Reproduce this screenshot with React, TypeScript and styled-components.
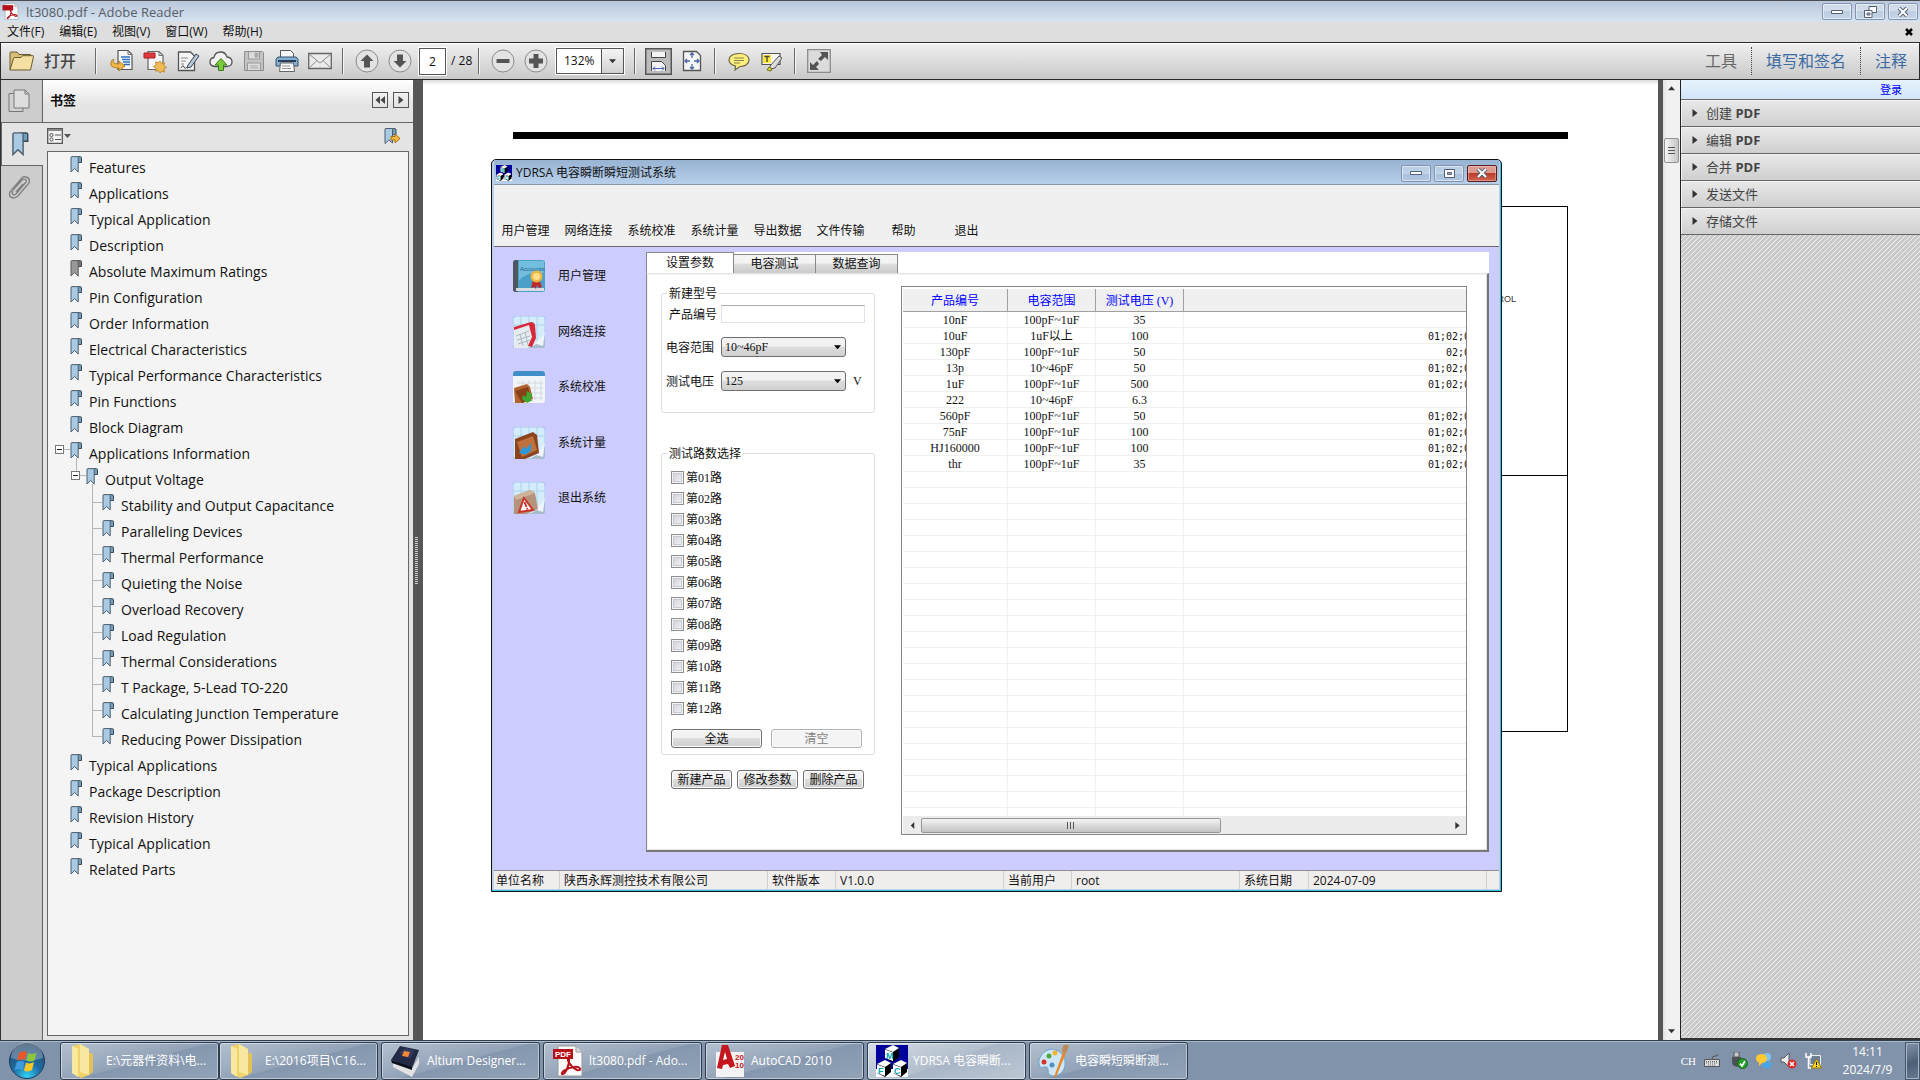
import React from "react";
import styled, { createGlobalStyle, css } from "styled-components";

const ui = '"Open Sans", "Noto Sans CJK SC", sans-serif';
const song = '"Liberation Serif", "Noto Sans CJK SC", serif';

const Global = createGlobalStyle`
  * { box-sizing: border-box; }
  body { margin: 0; overflow: hidden; font: 12px/16px ${ui}; color: #111; }
  button, input, select { font: inherit; color: inherit; margin: 0; padding: 0; border-radius: 0; }
  button { background: none; border: 0; }
  ul { list-style: none; margin: 0; padding: 0; }
  svg { display: block; flex: none; }
`;

/* ---------- reader shell ---------- */
const Desktop = styled.div`
  position: relative;
  height: 100vh;
  display: flex;
  flex-direction: column;
  background: #fff;
`;
const TitleBar = styled.header`
  height: 22px;
  flex: none;
  display: flex;
  align-items: center;
  gap: 7px;
  padding: 0 2px;
  border-top: 1px solid #4a4d52;
  background: linear-gradient(#b9c7da, #d5e3f1);
  color: #575d66;
`;
const TitleText = styled.span`
  flex: 1;
  font-size: 13px;
`;
const Controls = styled.div`
  display: flex;
  gap: 3px;
`;
const ControlButton = styled.button<{ $kind?: "close" }>`
  width: 30px;
  height: 17px;
  display: grid;
  place-items: center;
  border: 1px solid #8394b0;
  border-radius: 2px;
  box-shadow: inset 0 0 0 1px #ffffff80;
  background: linear-gradient(#ffffff40 50%, #a9bdd650 50%);
  ${(p) => p.$kind === "close" && css`
    border-color: #591c1c;
    background: linear-gradient(#dd9a8f 48%, #bc3c28 50%, #cf6450);
    box-shadow: inset 0 0 0 1px #ffffff50;
  `}
`;
const MenuBar = styled.nav`
  height: 20px;
  flex: none;
  display: flex;
  align-items: center;
  gap: 15px;
  padding: 0 6px 0 7px;
  background: #dedede;
`;
const MenuClose = styled.button`
  margin-left: auto;
  width: 10px;
  height: 16px;
  display: grid;
  place-items: center;
`;
const ToolBar = styled.div`
  height: 38px;
  flex: none;
  display: flex;
  align-items: center;
  padding: 0 12px 0 5px;
  border: 1px solid #2b2b2b;
  box-shadow: inset 0 1px 0 #fff;
  background: linear-gradient(#f0f0f0, #c9c9c9);
`;
const OpenButton = styled.button`
  display: flex;
  align-items: center;
  gap: 10px;
  width: 83px;
  padding-left: 2px;
  font-size: 16px;
  font-weight: 500;
  color: #444;
`;
const Sep = styled.span`
  width: 2px;
  height: 26px;
  margin: 0 6px;
  border-left: 1px solid #6b6b6b;
  border-right: 1px solid #f4f4f4;
`;
const ToolSet = styled.div`
  display: flex;
  padding-left: 2px;
`;
const Tool = styled.button`
  width: 33px;
  height: 27px;
  display: grid;
  place-items: center;
`;
const PageInput = styled.input`
  width: 27px;
  height: 27px;
  margin: 0 5px 0 3px;
  text-align: center;
  border: 1px solid #555;
  outline: 1px solid #fff;
  background: #fff;
`;
const Zoom = styled.div`
  display: flex;
  width: 68px;
  height: 26px;
  margin: 0 4px 0 4px;
  border: 1px solid #555;
  outline: 1px solid #fff;
  background: #fff;
`;
const ZoomInput = styled.input`
  width: 44px;
  text-align: center;
  border: 0;
  background: #fff;
`;
const ZoomDrop = styled.button`
  flex: 1;
  display: grid;
  place-items: center;
  border-left: 1px solid #555;
  background: linear-gradient(#f5f5f5, #d2d2d2);
`;
const TaskLinks = styled.div`
  margin-left: auto;
  display: flex;
`;
const TaskLink = styled.button<{ $active?: boolean }>`
  height: 28px;
  padding: 0 14px;
  font-size: 16px;
  color: ${(p) => (p.$active ? "#686868" : "#3d6ba3")};
  border-right: 1px dotted #444;
  &:last-child { border: 0; padding-right: 0; }
`;
const Main = styled.main`
  flex: 1;
  min-height: 0;
  display: flex;
`;
const Rail = styled.nav`
  width: 43px;
  flex: none;
  border-left: 1px solid #333;
  background: linear-gradient(90deg, #cdcdcd 40px, #bdbdbd);
  border-right: 1px solid #666;
`;
const RailTab = styled.button<{ $on?: boolean }>`
  width: ${(p) => (p.$on ? 42 : 41)}px;
  height: ${(p) => (p.$on ? 44 : 42)}px;
  display: grid;
  place-items: center;
  padding-right: 5px;
  ${(p) => p.$on && css`
    position: relative;
    border: 1px solid #666;
    border-right: 0;
    background: #e4e4e4;
  `}
`;
const Side = styled.aside`
  width: 370px;
  flex: none;
  display: flex;
  flex-direction: column;
  background: #e4e4e4;
`;
const SideHead = styled.div`
  height: 43px;
  display: flex;
  align-items: center;
  gap: 5px;
  padding: 0 4px 2px 7px;
  border-bottom: 1px solid #666;
  background: linear-gradient(#fff, #e4e4e4 60%);
`;
const SideTitle = styled.h2`
  flex: 1;
  margin: 0;
  font-size: 13px;
  font-weight: 700;
`;
const SmallBox = styled.button`
  width: 16px;
  height: 16px;
  display: grid;
  place-items: center;
  border: 1px solid #555;
`;
const SideTools = styled.div`
  height: 28px;
  display: flex;
  align-items: center;
  justify-content: space-between;
  padding: 0 11px 2px 4px;
`;
const TreeBox = styled.div`
  flex: 1;
  margin: 0 4px 4px;
  padding-top: 3px;
  border: 1px solid #666;
  background: #f4f4f4;
`;
const Node = styled.li<{ $level: number }>`
  position: relative;
  height: 26px;
  display: flex;
  align-items: center;
  gap: 7px;
  padding-left: ${(p) => 22 + p.$level * 16}px;
  font-size: 14px;
  line-height: 26px;
  white-space: nowrap;
  & > svg { margin-bottom: 7px; }
`;
const Twist = styled.button<{ $level: number }>`
  position: absolute;
  top: 4px;
  left: ${(p) => 7 + p.$level * 16}px;
  width: 9px;
  height: 9px;
  border: 1px solid #777;
  background: linear-gradient(#222, #222) center / 5px 1px no-repeat #fff;
  &::after {
    content: "";
    position: absolute;
    left: 8px;
    top: 3px;
    width: 6px;
    height: 1px;
    background: #b5b5b5;
  }
`;
const Branch = styled.i<{ $level: number }>`
  position: absolute;
  left: ${(p) => 12 + p.$level * 16}px;
  top: -9px;
  width: 1px;
  height: 13px;
  border-left: 1px solid #b5b5b5;
`;
const LeafBranch = styled(Branch)<{ $first: boolean }>`
  top: ${(p) => (p.$first ? -9 : -17)}px;
  width: 10px;
  height: ${(p) => (p.$first ? 19 : 27)}px;
  border-bottom: 1px solid #b5b5b5;
`;
const Splitter = styled.div`
  width: 10px;
  flex: none;
  display: flex;
  align-items: center;
  padding-left: 2px;
  background: #565656;
`;
const Grip = styled.span`
  width: 3px;
  height: 47px;
  background: repeating-linear-gradient(#ccc 0 1px, #565656 1px 2px);
`;
const Doc = styled.section`
  flex: 1;
  min-width: 0;
  padding: 52px 90px 0;
  background: linear-gradient(#dcdcdc, #fff 5px);
`;
const Rule = styled.div`
  height: 7px;
  margin-bottom: 67px;
  background: #000;
`;
const Figure = styled.div`
  border: 1px solid #000;
`;
const FigurePart = styled.div<{ $h: number }>`
  height: ${(p) => p.$h}px;
  padding: 85px 51px 0 0;
  text-align: right;
  font: 9px/14px "Liberation Sans", sans-serif;
  color: #333;
  & + & { border-top: 1px solid #000; }
`;
const Edge = styled.div`
  width: 5px;
  flex: none;
  background: #565656;
`;
const VScroll = styled.div`
  width: 17px;
  flex: none;
  display: flex;
  flex-direction: column;
  align-items: center;
  background: linear-gradient(90deg, #e3e3e3, #f1f1f1 4px);
`;
const Arrow = styled.button`
  width: 18px;
  height: 17px;
  display: grid;
  place-items: center;
`;
const VThumb = styled.div`
  width: 15px;
  height: 25px;
  margin: 41px 0 auto;
  display: grid;
  place-items: center;
  border: 1px solid #929292;
  border-radius: 2px;
  background: linear-gradient(90deg, #f6f6f6, #c6c6c6);
`;
const Tools = styled.aside`
  width: 240px;
  flex: none;
  border-left: 1px solid #222;
  border-bottom: 2px solid #333;
  background: linear-gradient(135deg, #c9c9c9 40%, #f2f2f2 46% 54%, #c9c9c9 60%) 0 0 / 5px 5px;
`;
const SignIn = styled.div`
  height: 20px;
  padding-right: 18px;
  text-align: right;
  font-size: 11px;
  line-height: 20px;
  background: linear-gradient(#e6f3fd, #d2e6f8);
  border-bottom: 1px solid #666;
  & a { color: #0000f0; text-decoration: none; }
`;
const ToolRow = styled.button`
  width: 100%;
  height: 27px;
  display: flex;
  align-items: center;
  gap: 7px;
  padding-left: 10px;
  font-size: 13px;
  color: #444;
  border-bottom: 1px solid #666;
  background: linear-gradient(#e9e9e9, #cfcfcf);
  box-shadow: inset 1px 1px 0 #f4f4f4;
  & b { font-weight: 700; }
`;

/* ---------- test system window ---------- */
const Win = styled.section`
  position: absolute;
  left: 491px;
  top: 159px;
  width: 1011px;
  height: 733px;
  display: flex;
  flex-direction: column;
  padding: 0 2px 2px;
  border: 1px solid #111;
  border-radius: 5px 5px 0 0;
  background: #b9d1ea;
  box-shadow: inset -1px -1px 0 #2fc4e0;
`;
const WinTitle = styled.header`
  height: 25px;
  flex: none;
  display: flex;
  align-items: center;
  gap: 4px;
  padding: 2px 2px 0;
  border-bottom: 1px solid #8a98a8;
  background: linear-gradient(#98b4d3, #b7cfea);
`;
const WinName = styled.span`
  flex: 1;
`;
const WinMenu = styled.nav`
  height: 62px;
  flex: none;
  display: flex;
  align-items: flex-end;
  padding-bottom: 7px;
  border-bottom: 1px solid #6b6b6b;
  background: #f0f0f0;
`;
const WinMenuItem = styled.button`
  width: 63px;
  line-height: 16px;
`;
const WinBody = styled.div`
  flex: 1;
  min-height: 0;
  display: flex;
  padding: 5px 10px 18px 0;
  background: #ccccff;
`;
const Launch = styled.nav`
  width: 152px;
  flex: none;
  height: 262px;
  padding: 8px 0 0 19px;
  display: flex;
  flex-direction: column;
  justify-content: space-between;
`;
const LaunchItem = styled.button`
  display: flex;
  align-items: center;
  gap: 13px;
  font: 12px/32px ${song};
`;
const Tabs = styled.div`
  flex: 1;
  display: flex;
  flex-direction: column;
  min-width: 0;
  background: #fff;
  font: 12px/16px ${song};
`;
const TabStrip = styled.div`
  height: 21px;
  flex: none;
  display: flex;
  align-items: flex-end;
`;
const Tab = styled.button<{ $on?: boolean }>`
  width: ${(p) => (p.$on ? 88 : 82)}px;
  height: ${(p) => (p.$on ? 21 : 19)}px;
  border: 1px solid #888;
  border-bottom: 0;
  background: ${(p) => (p.$on ? "#fff" : "linear-gradient(#f4f4f4 45%, #dedede 50%, #cacaca)")};
  & + & { border-left-width: 0; }
`;
const TabBody = styled.div`
  flex: 1;
  min-height: 0;
  display: flex;
  gap: 26px;
  padding: 12px 20px 15px 14px;
  border: 1px solid #888;
  border-top-color: #e3e3e3;
  border-right: 2px solid #777;
  border-bottom: 2px solid #777;
  box-shadow: inset 1px 1px 0 #f2f2f2, inset -1px -1px 0 #e3e3e3;
`;
const Form = styled.div`
  width: 214px;
  flex: none;
`;
const Group = styled.fieldset`
  margin: 0 0 33px;
  padding: 5px 0 21px 4px;
  border: 1px solid #d5dfe5;
  border-radius: 3px;
  & legend { margin-left: 1px; padding: 2px 2px 0; line-height: 12px; }
`;
const Channels = styled(Group)`
  margin-bottom: 15px;
  padding: 7px 0 6px 9px;
  & legend { margin-left: -4px; }
`;
const Field = styled.div<{ $inset?: boolean }>`
  display: flex;
  align-items: center;
  margin-bottom: 14px;
  padding-left: ${(p) => (p.$inset ? 3 : 0)}px;
  gap: ${(p) => (p.$inset ? 4 : 7)}px;
  &:last-child { margin: 0; }
  & label { width: 48px; padding-top: 2px; white-space: nowrap; }
`;
const TextBox = styled.input`
  width: 144px;
  height: 18px;
  border: 1px solid #dde3ea;
  border-top-color: #abadb3;
  border-radius: 1px;
`;
const Pick = styled.div`
  display: grid;
  align-items: center;
  width: 125px;
  & > * { grid-area: 1 / 1; }
  & > svg { justify-self: end; margin-right: 5px; pointer-events: none; }
`;
const Select = styled.select`
  appearance: none;
  width: 125px;
  height: 20px;
  padding: 0 3px;
  border: 1px solid #707070;
  border-radius: 3px;
  background: linear-gradient(#f2f2f2 45%, #dddddd 50%, #cfcfcf);
`;
const Check = styled.label`
  height: 21px;
  display: flex;
  align-items: center;
  gap: 2px;
`;
const Box = styled.input`
  appearance: none;
  width: 13px;
  height: 13px;
  border: 1px solid #8e8f8f;
  background: linear-gradient(135deg, #c8ccd4, #f8f8f8) padding-box;
  box-shadow: inset 0 0 0 1px #f4f4f4, inset 0 0 0 2px #c6cad2;
`;
const Buttons = styled.div<{ $gap: number; $pad?: number }>`
  display: flex;
  gap: ${(p) => p.$gap}px;
  padding-left: ${(p) => p.$pad || 0}px;
`;
const Push = styled.button<{ $w: number }>`
  width: ${(p) => p.$w}px;
  height: 19px;
  border: 1px solid #707070;
  border-radius: 3px;
  box-shadow: inset 0 0 0 1px #fcfcfc;
  background: linear-gradient(#f2f2f2 45%, #dddddd 50%, #cfcfcf);
  &:disabled { color: #838383; border-color: #adb2b5; background: #f4f4f4; }
`;
const SelectRow = styled(Buttons)`
  margin-top: 10px;
`;
const ListView = styled.div`
  flex: 1;
  min-width: 0;
  display: flex;
  flex-direction: column;
  padding: 2px 0 0 1px;
  border: 1px solid #828790;
`;
const Scroller = styled.div`
  flex: 1 1 0;
  min-height: 0;
  overflow: hidden;
`;
const Grid = styled.table`
  width: 100%;
  table-layout: fixed;
  border-collapse: separate;
  border-spacing: 0;
  text-align: center;
  & th {
    height: 23px;
    padding: 2px 0 0;
    font-weight: 400;
    color: #0000ff;
    background: #f0f0f0;
    border-right: 1px solid #a0a0a0;
    border-bottom: 1px solid #a0a0a0;
  }
  & td {
    height: 16px;
    padding: 2px 0 0;
    line-height: 13px;
    overflow: hidden;
    white-space: nowrap;
    border-right: 1px solid #f0f0f0;
    border-bottom: 1px solid #f0f0f0;
  }
  & th:last-child, & td:last-child { border-right: 0; }
`;
const Col = styled.col<{ $w?: number }>`
  width: ${(p) => (p.$w ? p.$w + "px" : "auto")};
`;
const Route = styled.td<{ $start: number }>`
  && { padding-left: ${(p) => p.$start}px; }
  text-align: left;
  font: 10px/13px "DejaVu Sans Mono", monospace;
`;
const HScroll = styled.div`
  height: 18px;
  flex: none;
  display: flex;
  align-items: center;
  background: #ececec;
`;
const HThumb = styled.div`
  width: 300px;
  height: 15px;
  margin-right: auto;
  display: grid;
  place-items: center;
  border: 1px solid #979797;
  border-radius: 2px;
  background: linear-gradient(#f3f3f3, #dcdcdc 48%, #c3c3c3);
`;
const Status = styled.footer`
  height: 19px;
  flex: none;
  display: flex;
  border-top: 1px solid #8d8d8d;
  background: #f0eded;
`;
const StatusCell = styled.span<{ $w: number }>`
  width: ${(p) => p.$w}px;
  padding-left: 4px;
  line-height: 19px;
  white-space: nowrap;
  border-right: 1px solid #d2cece;
  &:first-child { padding-left: 2px; }
`;

/* ---------- taskbar ---------- */
const TaskBar = styled.footer`
  height: 40px;
  flex: none;
  display: flex;
  align-items: center;
  border-top: 1px solid #33404f;
  box-shadow: inset 0 1px 0 #a9b9cb;
  background: #8193aa;
  color: #fff;
`;
const Start = styled.button`
  width: 60px;
  padding-left: 8px;
`;
const TaskButton = styled.button<{ $joined?: boolean; $on?: boolean }>`
  width: 159px;
  height: 38px;
  display: flex;
  align-items: center;
  gap: 5px;
  padding: 0 6px 0 8px;
  margin-right: ${(p) => (p.$joined ? 0 : 3)}px;
  border: 1px solid #2f3c4d;
  border-radius: 3px;
  box-shadow: inset 0 0 0 1px #ffffff70;
  white-space: nowrap;
  background: ${(p) => p.$on
    ? "linear-gradient(160deg, #d5dde6, #b3bfcd 50%, #a8b6c6 52%, #bcc7d4)"
    : "linear-gradient(165deg, #b3c0cf, #93a3b8 50%, #8597ae 52%, #92a3b8)"};
`;
const Tray = styled.div`
  margin-left: auto;
  display: flex;
  align-items: center;
  gap: 8px;
`;
const TrayEnd = styled.div`
  display: flex;
  align-items: center;
`;
const Lang = styled.span`
  font: 11px/16px "Liberation Serif", serif;
`;
const Clock = styled.time`
  width: 75px;
  text-align: center;
  font-size: 12px;
  line-height: 18px;
`;
const Peek = styled.button`
  width: 15px;
  height: 38px;
  border: 1px solid #46566a;
  box-shadow: inset 0 0 0 1px #a5b5c7;
  background: linear-gradient(160deg, #8495aa, #4c5e75 55%, #6b7d94);
`;

/* ---------- drawings ---------- */
const Ribbon = ({ grey = false, w = 12, h = 17 }) => (
  <svg width={w} height={h} viewBox="0 0 12 17">
    <path d="M6 .7h4.3q1.2 0 1.2 1v4.8H8" fill={grey ? "#777" : "#6f9fbe"} stroke="#3d4a57" />
    <path d="M1 1.5Q1 .6 2 .6h5.2q1 0 1 1V16L4.6 12.5 1 16z" fill={grey ? "#999" : "#a9cae2"} stroke={grey ? "#5a5a5a" : "#4c5f70"} />
  </svg>
);
const Tri = ({ dir = "down", s = 7, c = "#333" }: { dir?: string; s?: number; c?: string }) => {
  const d: Record<string, string> = { down: "M0 1.5h8L4 6z", up: "M0 6h8L4 1.5z", left: "M6 0v8L2 4z", right: "M1.5 0v8l5-4z" };
  return <svg width={s} height={s} viewBox="0 0 8 8"><path d={d[dir]} fill={c} /></svg>;
};
const Mono = ({ children }: { children: React.ReactNode }) => (
  <svg width="24" height="24" viewBox="0 0 24 24" fill="none">{children}</svg>
);
const IcFolder = () => (
  <svg width="26" height="22" viewBox="0 0 26 22"><path d="M2 20V3q0-1 1-1h6l2 2.500h11q1 0 1 1V9" fill="#d9bf76" stroke="#6a5a30" /><path d="M2 20 5.500 8.500q.3-1 1.300-1H13l1.500-1.800H25q.6 0 .5.800L22.500 20z" fill="#f4e0a2" stroke="#6a5a30" /></svg>
);
const toolIcons: [string, React.ReactNode][] = [
  ["转换", <Mono key="a"><path d="M8 1.500h10l4 4v15H8z" fill="#f6f6f6" stroke="#555" strokeWidth="1.200" /><path d="M18 1.500v4h4" stroke="#777" /><path d="M11 8h9M12 10.500h8M13 13h7M14 15.500h6" stroke="#2d73c4" strokeWidth="1.400" /><path d="M4 10.500q-3 4.500 5 4.500v-3l6 5-6 5v-3Q-2 19 1.500 12q1-2 2.500-1.500z" fill="#f2b746" stroke="#a46c14" strokeWidth=".8" /></Mono>],
  ["创建", <Mono key="b"><path d="M5 2.500h11l4 4v14H5z" fill="#f6f6f6" stroke="#666" strokeWidth="1.200" /><path d="M16 2.500v4h4" stroke="#777" /><path d="M1 4h11v5H1z" fill="#e0393e" stroke="#a81c22" /><path d="m17 12 1.500 2.500 3-.7-.7 3 2.700 1.600-2.700 1.600.7 3-3-.7L17 24l-1.500-2.500-3 .7.700-3-2.700-1.600 2.700-1.600-.7-3 3 .7z" fill="#f0bb55" stroke="#b67b1d" strokeWidth=".8" /></Mono>],
  ["签名", <Mono key="c"><path d="M2.500 3h12l4 4v14.500h-16z" fill="#f6f6f6" stroke="#555" strokeWidth="1.300" /><path d="M5 9h7M5 12h5M5 15h3" stroke="#888" /><path d="M5 19q2-4 3-1t4-1 3 0" stroke="#444" /><path d="M12 16 20 5l3 2-8 11-4 1z" fill="#b7c7d8" stroke="#39485a" /></Mono>],
  ["上传", <Mono key="d"><path d="M6 17.500Q.7 17 1 12.500q.3-3.500 4-4Q6 3 11.500 3q5 0 6.500 5 5 .5 5 5 0 4-5 4.500z" fill="#f1f1f1" stroke="#555" strokeWidth="1.300" /><path d="M12 9.500 18 16h-3.500v5.500h-5V16H6z" fill="#7ccb3f" stroke="#3a7c17" /></Mono>],
  ["保存", <Mono key="e"><path d="M2.500 2.500h18l1 1v18h-19z" fill="#c3c3c3" stroke="#8e8e8e" /><path d="M6.500 3v7h11V3M5.500 21v-7h13v7" fill="#dcdcdc" stroke="#999" /><path d="M13 4h3v4h-3zM8 17h8M8 19h8" fill="#aaa" stroke="#aaa" /></Mono>],
  ["打印", <Mono key="f"><path d="M5.500 9V1.500h10l3 3V9" fill="#f7f7f7" stroke="#555" /><path d="M3 8h18l2 2v7H1v-7z" fill="#86aed0" stroke="#33506b" /><path d="M3 12h18" stroke="#2b4056" strokeWidth="2" /><path d="M5.500 14h13l1 8.500h-15z" fill="#f7f7f7" stroke="#666" /><path d="M7 17h8M7 19.500h9" stroke="#999" /></Mono>],
  ["邮件", <Mono key="g"><path d="M.7 4.500h22.600v15H.7z" fill="#eaeaea" stroke="#666" strokeWidth="1.300" /><path d="m1 5 11 9L23 5M1 19l8-7.500M23 19l-8-7.500" stroke="#8b8b8b" /></Mono>],
];
const Round = ({ d }: { d: string }) => (
  <Mono><circle cx="12" cy="12" r="11" fill="#e3e3e3" stroke="#8a8a8a" /><path d={d} fill="#555" /></Mono>
);
const IcPdf = ({ s = 17 }) => (
  <svg width={s} height={s} viewBox="0 0 32 32"><path d="M6 1h18l6 6v24H6z" fill="#fafafa" stroke="#999" /><path d="M24 1v6h6" fill="#ddd" stroke="#999" /><path d="M1 4h20v10H1z" fill="#b5121b" /><path d="M17 13c-3 0 0 8 8 12 6 1 3-4-3-3-7 1-13 5-12 7 3 1 8-9 7-16z" fill="none" stroke="#b5121b" strokeWidth="2" />
  {s > 20 && <text x="3" y="12" fontSize="8" fontWeight="700" fontFamily="Liberation Sans" fill="#fff">PDF</text>}</svg>
);
const Cube = ({ x, y, t }: { x: number; y: number; t: string }) => (
  <g transform={`translate(${x} ${y})`}>
    <path d="M1 4 9 0l6 3v9l-6 5-8-4z" fill="#000" />
    <path d="M1 4 9 0l6 3-6 4z" fill="#fff" />
    <path d="M1 4.500 9 7.500V16l-8-3z" fill="#fff" />
    <text x="2" y="14" fontSize="9" fontWeight="700" fontFamily="Liberation Sans" fill="#00a8b8">{t}</text>
  </g>
);
const IcMfc = ({ s = 16 }) => (
  <svg width={s} height={s} viewBox="0 0 32 32">
    <path d="M0 0h32v32H0z" fill="#00009c" />
    <path d="M0 24h32v8H0z" fill="#fff" />
    <Cube x={8} y={0} t="M" /><Cube x={0} y={15} t="F" /><Cube x={16} y={15} t="C" />
  </svg>
);
const IcMin = () => <svg width="12" height="6" viewBox="0 0 12 6"><path d="M.5 1.500h11v3H.5z" fill="#fff" stroke="#555f73" /></svg>;
const IcMax = () => <svg width="11" height="9" viewBox="0 0 11 9"><path d="M.5.5h10v8H.5z" fill="#fff" stroke="#555f73" /><path d="M3.500 3.500h4v2h-4z" fill="#9fb5cf" stroke="#555f73" /></svg>;
const IcRestore = () => <svg width="13" height="12" viewBox="0 0 13 12"><path d="M5 .5h7.500v6H5z" fill="#fff" stroke="#555f73" /><path d="M.5 4.500H8v7H.5z" fill="#fff" stroke="#555f73" /><path d="M3 7h3v2H3z" fill="#b9c7da" stroke="#555f73" /></svg>;
const IcX = () => <svg width="12" height="10" viewBox="0 0 12 10"><path d="m2 1 8 8M10 1 2 9" stroke="#555f73" strokeWidth="4" /><path d="m2 1 8 8M10 1 2 9" stroke="#fff" strokeWidth="2" /></svg>;

const paperBase = (
  <><rect width="32" height="32" rx="3" fill="#d5ecfb" stroke="#9cc8e6" /><path d="M8 0v32M16 0v14M24 0v32M0 9h32" stroke="#a9d3ee" /><path d="M14 32q10-1 18-14v11q0 3-3 3z" fill="#a7bccb" /><path d="M20 27q7-2 12-11l-2 14z" fill="#edf5fa" /></>
);
const launchItems: [string, React.ReactNode][] = [
  ["用户管理", <svg key="1" width="32" height="32" viewBox="0 0 32 32"><rect width="32" height="32" rx="3" fill="#4ba0ca" /><path d="M0 3q0-3 3-3h2v32H3q-3 0-3-3z" fill="#50565e" /><path d="M3 28h28v3H3z" fill="#d8dde2" /><path d="M6 1h25v12Q18 10 6 20z" fill="#73bddf" /><text x="7" y="11" fontSize="6" fontFamily="Liberation Sans" fill="#1c5f8a">Accounts</text><path d="m20 20-2 8 3-1 2 2 1-4 2 3 3-1-3-8z" fill="#c0282c" /><circle cx="23.500" cy="16.500" r="6" fill="#f0b440" /><circle cx="23.500" cy="16.500" r="3.500" fill="#ffdf8c" /></svg>],
  ["网络连接", <svg key="2" width="32" height="32" viewBox="0 0 32 32">{paperBase}<path d="m1 11 18-4 4 20-9 5H1z" fill="#e6ebef" /><path d="m1 11 17-5q3 0 4 3l1 13-4 9-4-1 4-9-3-12-15 5z" fill="#d42a3c" /><path d="m3 20 13-5M4 24l13-4M5 28l12-4M7 18l3 12M12 16l3 13" stroke="#a9b8c3" /></svg>],
  ["系统校准", <svg key="3" width="32" height="32" viewBox="0 0 32 32"><rect width="32" height="32" rx="3" fill="#f2f5f7" /><path d="M0 5V3q0-3 3-3h26q3 0 3 3v2z" fill="#3f8fc9" /><path d="M4 12h26M4 17h26M4 22h26M4 27h26M10 9v20M16 9v20M22 9v20M28 9v20" stroke="#d2dbe2" /><path d="m1 17 13-4 3 3 3 12-10 4H2z" fill="#b0642f" /><path d="m2 20 13-4 3 12-9 4z" fill="#874018" /><path d="m10 24 3 2 1-6 5 3-1 6h2l-6 3-5-4z" fill="#3da934" /></svg>],
  ["系统计量", <svg key="4" width="32" height="32" viewBox="0 0 32 32">{paperBase}<path d="m2 12 18-7 4 3 2 18-14 6H2z" fill="#8c4320" /><path d="m4 15 16-6 4 14-15 7z" fill="#c0713b" /><path d="m6 26 5-7 2 3 5-6v8l-5 3 2 1z" fill="#2a99dd" /></svg>],
  ["退出系统", <svg key="5" width="32" height="32" viewBox="0 0 32 32">{paperBase}<path d="m1 14 16-6 5 3 3 16-12 5H1z" fill="#b4937a" /><path d="m1 14 16-6 5 3-19 7z" fill="#cfb49c" /><path d="m6 30 5-14 9 12z" fill="#fff" stroke="#c9352b" strokeWidth="2" /><path d="m11.500 20 2 5M14 26l.5 1.500" stroke="#c9352b" strokeWidth="2" /></svg>],
];
const FolderTask = () => (
  <svg width="32" height="36" viewBox="0 0 32 36"><path d="m3 3 8-2 9 5v26l-8 3-9-5z" fill="#efd26a" /><path d="M11 1v28l9 3V6z" fill="#f8e79e" /><path d="M20 10q4-1 4 3v16l-4 3z" fill="#e4c257" /><path d="M3 3v27l6 4V6z" fill="#f9e99f" /></svg>
);

const nodes: [string, number][] = [
  ["Features", 0], ["Applications", 0], ["Typical Application", 0], ["Description", 0],
  ["Absolute Maximum Ratings", 0], ["Pin Configuration", 0], ["Order Information", 0],
  ["Electrical Characteristics", 0], ["Typical Performance Characteristics", 0], ["Pin Functions", 0],
  ["Block Diagram", 0], ["Applications Information", 0], ["Output Voltage", 1],
  ["Stability and Output Capacitance", 2], ["Paralleling Devices", 2], ["Thermal Performance", 2],
  ["Quieting the Noise", 2], ["Overload Recovery", 2], ["Load Regulation", 2],
  ["Thermal Considerations", 2], ["T Package, 5-Lead TO-220", 2], ["Calculating Junction Temperature", 2],
  ["Reducing Power Dissipation", 2], ["Typical Applications", 0], ["Package Description", 0],
  ["Revision History", 0], ["Typical Application", 0], ["Related Parts", 0],
];
const rows: [string, string, string, string][] = [
  ["10nF", "100pF~1uF", "35", ""], ["10uF", "1uF以上", "100", "01;02;0"], ["130pF", "100pF~1uF", "50", "02;0"],
  ["13p", "10~46pF", "50", "01;02;0"], ["1uF", "100pF~1uF", "500", "01;02;0"], ["222", "10~46pF", "6.3", ""],
  ["560pF", "100pF~1uF", "50", "01;02;0"], ["75nF", "100pF~1uF", "100", "01;02;0"],
  ["HJ160000", "100pF~1uF", "100", "01;02;0"], ["thr", "100pF~1uF", "35", "01;02;0"],
];
const blankRows = Array.from({ length: 22 }, (_, i) => i);
const channels = Array.from({ length: 12 }, (_, i) => `第${String(i + 1).padStart(2, "0")}路`);
const status: [string, number][] = [
  ["单位名称", 66], ["陕西永辉测控技术有限公司", 208], ["软件版本", 68], ["V1.0.0", 168],
  ["当前用户", 68], ["root", 168], ["系统日期", 69], ["2024-07-09", 178],
];
const tasks: { text: string; icon: React.ReactNode; joined?: boolean; on?: boolean }[] = [
  { text: "E:\\元器件资料\\电...", icon: <FolderTask />, joined: true },
  { text: "E:\\2016项目\\C16...", icon: <FolderTask /> },
  { text: "Altium Designer...", icon: <svg width="32" height="34" viewBox="0 0 32 34"><path d="m3 17 19 8 7-12v7l-7 13L3 23z" fill="#e2e2e2" /><path d="m1 16 9-14 19 4-7 18z" fill="#222a44" /><path d="m9 9 6-5 10 2-5 9z" fill="#33395c" /><path d="m14 7 6 1-2 5-6-1z" fill="#f08a3a" /><path d="m1 16 21 7v3L2 19z" fill="#0b0f1c" /></svg> },
  { text: "lt3080.pdf - Ado...", icon: <IcPdf s={32} /> },
  { text: "AutoCAD 2010", icon: <svg width="32" height="34" viewBox="0 0 32 34"><path d="M2 8h28v25H2z" fill="#f3f3f3" /><path d="M3 24 8 1h6l7 21-5 2-2-4-5 1-1 4z" fill="#c4161c" /><path d="m11 8 2 7-4 1z" fill="#fff" /><text x="21" y="16" fontSize="8" fontWeight="700" fontFamily="Liberation Sans" fill="#c4161c">20</text><text x="21" y="24" fontSize="8" fontWeight="700" fontFamily="Liberation Sans" fill="#c4161c">10</text></svg> },
  { text: "YDRSA 电容瞬断...", icon: <IcMfc s={32} />, on: true },
  { text: "电容瞬短瞬断测...", icon: <svg width="32" height="34" viewBox="0 0 32 34"><path d="M14 5C5 6 0 14 1 20q1 5 5 3 4-1 4 3 0 6 6 6 9-1 11-10Q29 8 14 5z" fill="#cfe6f6" stroke="#6aa4cb" /><circle cx="11" cy="12" r="2.500" fill="#51a83b" /><circle cx="17" cy="9" r="2.500" fill="#f2b62e" /><circle cx="6" cy="18" r="2.500" fill="#d8342b" /><circle cx="14" cy="21" r="2.500" fill="#4d8fc4" /><path d="m25 8 3 1-10 24h-2z" fill="#e58a2b" /><path d="m24 8 1-6q3-3 6 0l-3 7z" fill="#bd8a55" /></svg> },
];

export default function App() {
  return (
    <Desktop>
      <Global />
      <TitleBar>
        <IcPdf />
        <TitleText>lt3080.pdf - Adobe Reader</TitleText>
        <Controls>
          <ControlButton aria-label="最小化"><IcMin /></ControlButton>
          <ControlButton aria-label="还原"><IcRestore /></ControlButton>
          <ControlButton aria-label="关闭"><IcX /></ControlButton>
        </Controls>
      </TitleBar>
      <MenuBar>
        {["文件(F)", "编辑(E)", "视图(V)", "窗口(W)", "帮助(H)"].map((m) => <button key={m}>{m}</button>)}
        <MenuClose aria-label="关闭文档"><svg width="8" height="8" viewBox="0 0 8 8"><path d="m1 1 6 6M7 1 1 7" stroke="#000" strokeWidth="2.500" /></svg></MenuClose>
      </MenuBar>
      <ToolBar>
        <OpenButton><IcFolder />打开</OpenButton>
        <Sep />
        <ToolSet>
          {toolIcons.map(([name, icon]) => <Tool key={name} aria-label={name}>{icon}</Tool>)}
        </ToolSet>
        <Sep />
        <Tool aria-label="上一页"><Round d="M12 5.500 18.500 12H15v6.500H9V12H5.500z" /></Tool>
        <Tool aria-label="下一页"><Round d="M12 18.500 18.500 12H15V5.500H9V12H5.500z" /></Tool>
        <PageInput aria-label="页码" defaultValue="2" />
        <span>/ 28</span>
        <Sep />
        <Tool aria-label="缩小"><Round d="M5.500 10h13v4h-13z" /></Tool>
        <Tool aria-label="放大"><Round d="M5 9.500h4.500V5h5v4.500H19v5h-4.500V19h-5v-4.500H5z" /></Tool>
        <Zoom>
          <ZoomInput aria-label="缩放" defaultValue="132%" />
          <ZoomDrop aria-label="缩放选项"><Tri /></ZoomDrop>
        </Zoom>
        <Sep />
        <Tool aria-label="适合宽度">
          <svg width="27" height="27" viewBox="0 0 27 27" fill="none"><path d="M.7.7h25.600v25.600H.7z" fill="#bcbcbc" stroke="#555" strokeWidth="1.500" /><path d="M6.500 4v5.500h14V4" fill="#f4f4f4" stroke="#444" /><path d="M6.500 23V13.500h10l4 4V23" fill="#f4f4f4" stroke="#444" /><path d="M8 20.500h11M10 18.500l-2 2 2 2M17 18.500l2 2-2 2" stroke="#4a66a8" /></svg>
        </Tool>
        <Tool aria-label="适合页面"><Mono><path d="M3.500 2.500h13l4 4v15h-17z" fill="#f5f5f5" stroke="#555" strokeWidth="1.300" /><path d="M12 4v5M10 6l2-2 2 2M12 20v-5M10 18l2 2 2-2M5 12h5M7 10l-2 2 2 2M19 12h-5M17 10l2 2-2 2" stroke="#4a66a8" strokeWidth="1.300" /></Mono></Tool>
        <Sep />
        <Tool aria-label="附注"><Mono><path d="M12 4.500c6 0 10 2.500 10 6.500s-4 6.500-9 6.500L8 21l.5-4C5 16 2 14 2 11c0-4 4-6.500 10-6.500z" fill="#fbee7c" stroke="#6b6744" strokeWidth="1.200" /><path d="M7 9h10M7 11.500h10M7 14h6" stroke="#8a8450" /></Mono></Tool>
        <Tool aria-label="高亮"><Mono><path d="M2 4.500h18v11H2z" fill="#f5f5f5" stroke="#555" strokeWidth="1.200" /><path d="M3 6h8v8H3z" fill="#ffe837" /><path d="M4.500 7.500h5M7 7.500V13" stroke="#444" strokeWidth="1.300" /><path d="m10 17 9-10 3 2-7 10-5 1z" fill="#dcdcdc" stroke="#555" /><path d="m7 21 2-3 3 2-1 2z" fill="#dcd42d" stroke="#77721b" /></Mono></Tool>
        <Sep />
        <Tool aria-label="阅读模式"><Mono><path d="M.7.7h22.600v22.600H.7z" fill="#dcdcdc" stroke="#8c8c8c" strokeWidth="1.300" /><path d="M21 3v8l-3-3-4 4-3-2 4-4-2-3zM3 21v-8l3 3 4-4 2 3-3 3 3 3z" fill="#555" /></Mono></Tool>
        <TaskLinks>
          <TaskLink $active>工具</TaskLink>
          <TaskLink>填写和签名</TaskLink>
          <TaskLink>注释</TaskLink>
        </TaskLinks>
      </ToolBar>

      <Main>
        <Rail>
          <RailTab aria-label="页面"><svg width="22" height="24" viewBox="0 0 22 24"><path d="M1 4.500h14v18H1z" fill="#d0d0d0" stroke="#777" /><path d="M6 1h11l4 4v14H6z" fill="#dedede" stroke="#777" /><path d="M17 1v4h4" fill="none" stroke="#777" /></svg></RailTab>
          <RailTab $on aria-label="书签面板"><Ribbon w={18} h={24} /></RailTab>
          <RailTab aria-label="附件"><svg width="24" height="24" viewBox="0 0 24 24" fill="none"><path d="m6 15 9-10c3-2 5 0 4 2L9 19c-2 2-5 0-3-3M16 9 9 17M3 17 14 4c3-4 10-2 8 4L11 21c-5 4-10 1-8-4z" stroke="#808080" strokeWidth="1.400" /></svg></RailTab>
        </Rail>
        <Side>
          <SideHead>
            <SideTitle>书签</SideTitle>
            <SmallBox aria-label="折叠"><svg width="10" height="8" viewBox="0 0 10 8"><path d="M5 0v8L.5 4zM10 0v8L5.500 4z" fill="#444" /></svg></SmallBox>
            <SmallBox aria-label="隐藏"><Tri dir="right" s={8} c="#444" /></SmallBox>
          </SideHead>
          <SideTools>
            <button aria-label="选项"><svg width="25" height="16" viewBox="0 0 25 16"><path d="M.7.7h14.600v14.600H.7z" fill="#f4f4f4" stroke="#555" strokeWidth="1.300" /><path d="M1 2h14" stroke="#888" strokeWidth="2" /><path d="M8 7h6M8 11.500h6" stroke="#555" /><circle cx="4.500" cy="7" r="1.600" fill="none" stroke="#555" /><circle cx="4.500" cy="11.500" r="1.600" fill="none" stroke="#555" /><path d="M17 6h7l-3.500 4z" fill="#555" /></svg></button>
            <button aria-label="新建书签"><svg width="18" height="17" viewBox="0 0 18 17"><path d="M6 .7h5q1 0 1 1v5H9" fill="#6f9fbe" stroke="#3d4a57" /><path d="M1 1q0-.5 1-.5h5.500q1 0 1 1V15L4.800 12 1 15.500z" fill="#a9cae2" stroke="#4c5f70" /><path d="M7 8.500h4V6l5 4.500-5 4.500v-3H7z" fill="#f4b840" stroke="#a8700d" /></svg></button>
          </SideTools>
          <TreeBox>
            <ul>
              {nodes.map(([name, level], i) => (
                <Node key={i} $level={level}>
                  {nodes[i + 1] && nodes[i + 1][1] > level && <Twist $level={level} aria-label="折叠" />}
                  {level === 1 && <Branch $level={1} />}
                  {level === 2 && <LeafBranch $level={2} $first={nodes[i - 1][1] === 1} />}
                  <Ribbon grey={i === 4} />
                  {name}
                </Node>
              ))}
            </ul>
          </TreeBox>
        </Side>
        <Splitter><Grip /></Splitter>
        <Doc>
          <Rule />
          <Figure>
            <FigurePart $h={268}>ROL</FigurePart>
            <FigurePart $h={256} />
          </Figure>
        </Doc>
        <Edge />
        <VScroll>
          <Arrow aria-label="向上"><Tri dir="up" /></Arrow>
          <VThumb><svg width="7" height="8" viewBox="0 0 7 8"><path d="M0 .5h7M0 3.500h7M0 6.500h7" stroke="#555" /></svg></VThumb>
          <Arrow aria-label="向下"><Tri /></Arrow>
        </VScroll>
        <Tools>
          <SignIn><a href="#signin">登录</a></SignIn>
          {["创建", "编辑", "合并"].map((t) => <ToolRow key={t}><Tri dir="right" s={8} /><span>{t} <b>PDF</b></span></ToolRow>)}
          {["发送文件", "存储文件"].map((t) => <ToolRow key={t}><Tri dir="right" s={8} />{t}</ToolRow>)}
        </Tools>
      </Main>

      <Win>
        <WinTitle>
          <IcMfc />
          <WinName>YDRSA 电容瞬断瞬短测试系统</WinName>
          <Controls>
            <ControlButton aria-label="最小化"><IcMin /></ControlButton>
            <ControlButton aria-label="最大化"><IcMax /></ControlButton>
            <ControlButton $kind="close" aria-label="关闭"><IcX /></ControlButton>
          </Controls>
        </WinTitle>
        <WinMenu>
          {["用户管理", "网络连接", "系统校准", "系统计量", "导出数据", "文件传输", "帮助", "退出"].map((m) => <WinMenuItem key={m}>{m}</WinMenuItem>)}
        </WinMenu>
        <WinBody>
          <Launch>
            {launchItems.map(([name, icon]) => <LaunchItem key={name}>{icon}{name}</LaunchItem>)}
          </Launch>
          <Tabs>
            <TabStrip>
              <Tab $on>设置参数</Tab>
              <Tab>电容测试</Tab>
              <Tab>数据查询</Tab>
            </TabStrip>
            <TabBody>
              <Form>
                <Group>
                  <legend>新建型号</legend>
                  <Field $inset><label htmlFor="code">产品编号</label><TextBox id="code" /></Field>
                  <Field>
                    <label htmlFor="range">电容范围</label>
                    <Pick><Select id="range"><option>10~46pF</option></Select><Tri c="#000" /></Pick>
                  </Field>
                  <Field>
                    <label htmlFor="volt">测试电压</label>
                    <Pick><Select id="volt"><option>125</option></Select><Tri c="#000" /></Pick>
                    <span>V</span>
                  </Field>
                </Group>
                <Channels>
                  <legend>测试路数选择</legend>
                  {channels.map((c) => <Check key={c}><Box type="checkbox" />{c}</Check>)}
                  <SelectRow $gap={9}>
                    <Push $w={91}>全选</Push>
                    <Push $w={91} disabled>清空</Push>
                  </SelectRow>
                </Channels>
                <Buttons $gap={5} $pad={10}>
                  <Push $w={61}>新建产品</Push>
                  <Push $w={61}>修改参数</Push>
                  <Push $w={61}>删除产品</Push>
                </Buttons>
              </Form>
              <ListView>
                <Scroller>
                  <Grid>
                    <colgroup><Col $w={105} /><Col $w={88} /><Col $w={88} /><Col /></colgroup>
                    <thead><tr><th>产品编号</th><th>电容范围</th><th>测试电压 (V)</th><th /></tr></thead>
                    <tbody>
                      {rows.map(([code, range, volt, route]) => (
                        <tr key={code}><td>{code}</td><td>{range}</td><td>{volt}</td><Route $start={route.length < 5 ? 262 : 244}>{route}</Route></tr>
                      ))}
                      {blankRows.map((i) => <tr key={i}><td /><td /><td /><td /></tr>)}
                    </tbody>
                  </Grid>
                </Scroller>
                <HScroll>
                  <Arrow aria-label="向左"><Tri dir="left" /></Arrow>
                  <HThumb><svg width="8" height="7" viewBox="0 0 8 7"><path d="M.5 0v7M3.500 0v7M6.500 0v7" stroke="#555" /></svg></HThumb>
                  <Arrow aria-label="向右"><Tri dir="right" /></Arrow>
                </HScroll>
              </ListView>
            </TabBody>
          </Tabs>
        </WinBody>
        <Status>
          {status.map(([text, w]) => <StatusCell key={text} $w={w}>{text}</StatusCell>)}
        </Status>
      </Win>

      <TaskBar>
        <Start aria-label="开始">
          <svg width="38" height="38" viewBox="0 0 38 38"><defs><radialGradient id="orb" cx=".5" cy=".95" r=".9"><stop offset="0" stopColor="#35d3f8" /><stop offset=".45" stopColor="#1c6ea6" /><stop offset="1" stopColor="#2b4a6b" /></radialGradient></defs><circle cx="19" cy="19" r="17.500" fill="url(#orb)" stroke="#1e3a58" /><path d="M3 16a16 16 0 0 1 32 0q-16 5-32 0z" fill="#ffffff45" /><path d="M11 11q4-3 8-1l-2 8q-4-2-8 1z" fill="#e9562a" /><path d="M20.500 11q4 2 8-.5l-2 8q-4 2-8 0z" fill="#8cc83c" /><path d="M8.500 20.500q4-2.500 8-.5l-2 8q-4-2-8 .5z" fill="#3f9be0" /><path d="M18 20.500q4 2 8-.5l-2 8q-4 2.500-8 .5z" fill="#fbc926" /></svg>
        </Start>
        {tasks.map((t) => <TaskButton key={t.text} $joined={t.joined} $on={t.on}>{t.icon}{t.text}</TaskButton>)}
        <Tray>
          <Lang>CH</Lang>
          <svg width="16" height="16" viewBox="0 0 16 16"><path d="M8 6q0-3 3-3t3-2" fill="none" stroke="#555" /><path d="M.5 6.500h15v7H.5z" fill="#ddd" stroke="#555" /><path d="M2 8.500h12M2 10h12M4 12h8" stroke="#666" strokeDasharray="1 1" /></svg>
          <svg width="20" height="17" viewBox="-3 0 20 17"><path d="M3 0h5v5H3z" fill="#ccc" stroke="#555" /><path d="M1 5h9v5q0 4-4 5-5-1-5-5z" fill="#4d5257" /><circle cx="11.500" cy="11.500" r="5" fill="#25a02c" stroke="#0e6414" /><path d="m9 11.500 2 2.500 3-5" fill="none" stroke="#fff" strokeWidth="1.600" /></svg>
          <svg width="16" height="17" viewBox="0 0 16 17"><circle cx="11" cy="5" r="4" fill="#7cc4f2" /><ellipse cx="11" cy="13" rx="5" ry="3.500" fill="#4da5e6" /><ellipse cx="5.500" cy="6.500" rx="5.500" ry="4.500" fill="#ffc931" /><path d="M3 9v5l4-4z" fill="#ffc931" /></svg>
          <svg width="17" height="17" viewBox="0 0 17 17"><path d="M1 6h3l5-5v14l-5-5H1z" fill="#eee" stroke="#555" /><circle cx="12" cy="12" r="4.500" fill="#dc2b2b" /><path d="m10 10 4 4M14 10l-4 4" stroke="#fff" strokeWidth="1.500" /></svg>
          <svg width="17" height="17" viewBox="0 0 17 17"><path d="M5 3.500h10.500v9H5z" fill="#6d7f95" stroke="#eee" /><path d="M1 1v4h5V1M3.500 5v11H6" fill="none" stroke="#fff" strokeWidth="1.500" /><path d="m11.500 7 5 9h-10z" fill="#f9d428" stroke="#9a7c00" /><path d="M11.500 10v3M11.500 14v1" stroke="#000" /></svg>
          <TrayEnd>
            <Clock>14:11<br />2024/7/9</Clock>
            <Peek aria-label="显示桌面" />
          </TrayEnd>
        </Tray>
      </TaskBar>
    </Desktop>
  );
}
